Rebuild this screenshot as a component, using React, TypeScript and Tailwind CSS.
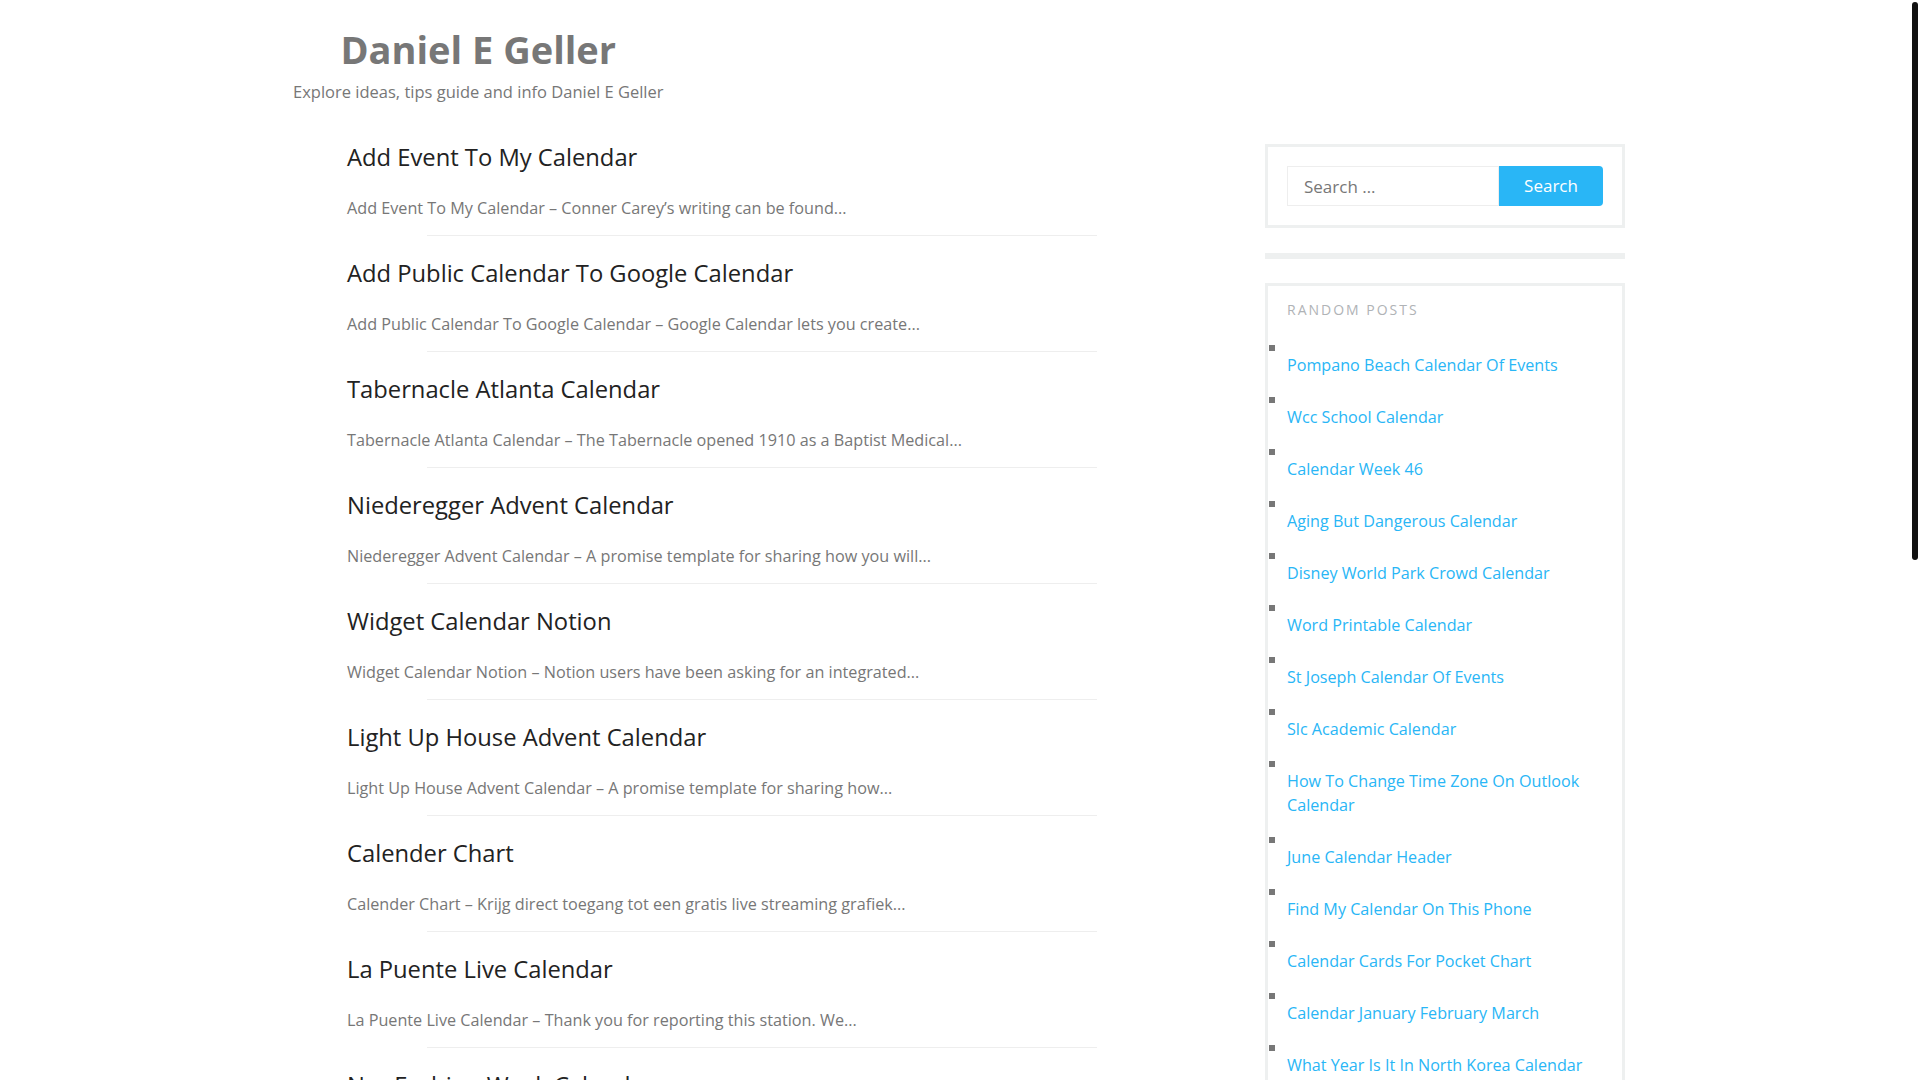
const posts = [
  {
    title: 'Add Event To My Calendar',
    excerpt: 'Add Event To My Calendar – Conner Carey’s writing can be found...',
  },
  {
    title: 'Add Public Calendar To Google Calendar',
    excerpt: 'Add Public Calendar To Google Calendar – Google Calendar lets you create...',
  },
  {
    title: 'Tabernacle Atlanta Calendar',
    excerpt: 'Tabernacle Atlanta Calendar – The Tabernacle opened 1910 as a Baptist Medical...',
  },
  {
    title: 'Niederegger Advent Calendar',
    excerpt: 'Niederegger Advent Calendar – A promise template for sharing how you will...',
  },
  {
    title: 'Widget Calendar Notion',
    excerpt: 'Widget Calendar Notion – Notion users have been asking for an integrated...',
  },
  {
    title: 'Light Up House Advent Calendar',
    excerpt: 'Light Up House Advent Calendar – A promise template for sharing how...',
  },
  {
    title: 'Calender Chart',
    excerpt: 'Calender Chart – Krijg direct toegang tot een gratis live streaming grafiek...',
  },
  {
    title: 'La Puente Live Calendar',
    excerpt: 'La Puente Live Calendar – Thank you for reporting this station. We...',
  },
  {
    title: 'Nyc Fashion Week Calendar',
    excerpt: 'Nyc Fashion Week Calendar – Find out what is happening on the runway...',
  },
]

const randomPosts = [
  'Pompano Beach Calendar Of Events',
  'Wcc School Calendar',
  'Calendar Week 46',
  'Aging But Dangerous Calendar',
  'Disney World Park Crowd Calendar',
  'Word Printable Calendar',
  'St Joseph Calendar Of Events',
  'Slc Academic Calendar',
  'How To Change Time Zone On Outlook Calendar',
  'June Calendar Header',
  'Find My Calendar On This Phone',
  'Calendar Cards For Pocket Chart',
  'Calendar January February March',
  'What Year Is It In North Korea Calendar',
]

function PostItem({ title, excerpt }: { title: string; excerpt: string }) {
  return (
    <article className="mb-[23px]">
      <h2 className="pl-[54px] text-[23.75px] leading-[29px] font-normal text-[#222222]">
        <a href="#">{title}</a>
      </h2>
      <p className="pl-[54px] mt-[24px] text-[16.2px] leading-[24px] text-[#777777]">{excerpt}</p>
      <div className="mt-[15px] ml-[134px] w-[670px] h-px bg-[#eeeeee]" />
    </article>
  )
}

function Sidebar() {
  return (
    <aside className="w-[360px] mt-[1px] mr-[2px] shrink-0">
      {/* search widget */}
      <div className="border-[3px] border-[#eef0f0] p-[19px]">
        <form className="flex" onSubmit={(e) => e.preventDefault()}>
          <input
            type="search"
            placeholder="Search …"
            className="w-[212px] h-[40px] border border-[#eeeeee] px-[16px] text-[17px] text-[#555] placeholder:text-[#777777] outline-none"
          />
          <button
            type="submit"
            className="w-[104px] h-[40px] rounded-r-[4px] bg-[#29b6f6] text-white text-[17px]"
          >
            Search
          </button>
        </form>
      </div>

      <div className="mt-[25px] h-[6px] bg-[#eef0f0]" />

      {/* random posts */}
      <div className="mt-[24px] border-[3px] border-[#eef0f0] px-[19px] pt-[14px] pb-[24px]">
        <h3 className="text-[14px] leading-[20px] uppercase tracking-[2px] text-[#b0b3b6] font-normal">
          Random Posts
        </h3>
        <ul className="mt-[25px]">
          {randomPosts.map((p) => (
            <li key={p} className="mb-[20px]">
              <div className="-ml-[18px] w-[6px] h-[6px] bg-[#777777]" />
              <a href="#" className="block mt-[2px] text-[16.15px] leading-[24px] text-[#29b6f6]">
                {p}
              </a>
            </li>
          ))}
        </ul>
      </div>
    </aside>
  )
}

export default function App() {
  return (
    <div
      className="relative h-[1080px] overflow-hidden bg-white"
      style={{ fontFamily: '"Open Sans", "Noto Sans", sans-serif' }}
    >
      <div className="w-[1334px] mx-auto">
        {/* Site header */}
        <header className="pt-[26px]">
          <div className="inline-block text-center">
            <h1 className="text-[38px] leading-[46px] font-bold text-[#777777]">
              <a href="#">Daniel E Geller</a>
            </h1>
            <p className="mt-[8px] text-[16.5px] leading-[24px] text-[#777777]">
              Explore ideas, tips guide and info Daniel E Geller
            </p>
          </div>
        </header>

        <div className="flex mt-[39px]">
          <main className="flex-1">
            {posts.map((post) => (
              <PostItem key={post.title} title={post.title} excerpt={post.excerpt} />
            ))}
          </main>
          <Sidebar />
        </div>
      </div>

      {/* overlay scrollbar thumb */}
      <div className="absolute right-[2px] top-[2px] w-[6px] h-[558px] rounded-full bg-[#111111]" />
    </div>
  )
}
